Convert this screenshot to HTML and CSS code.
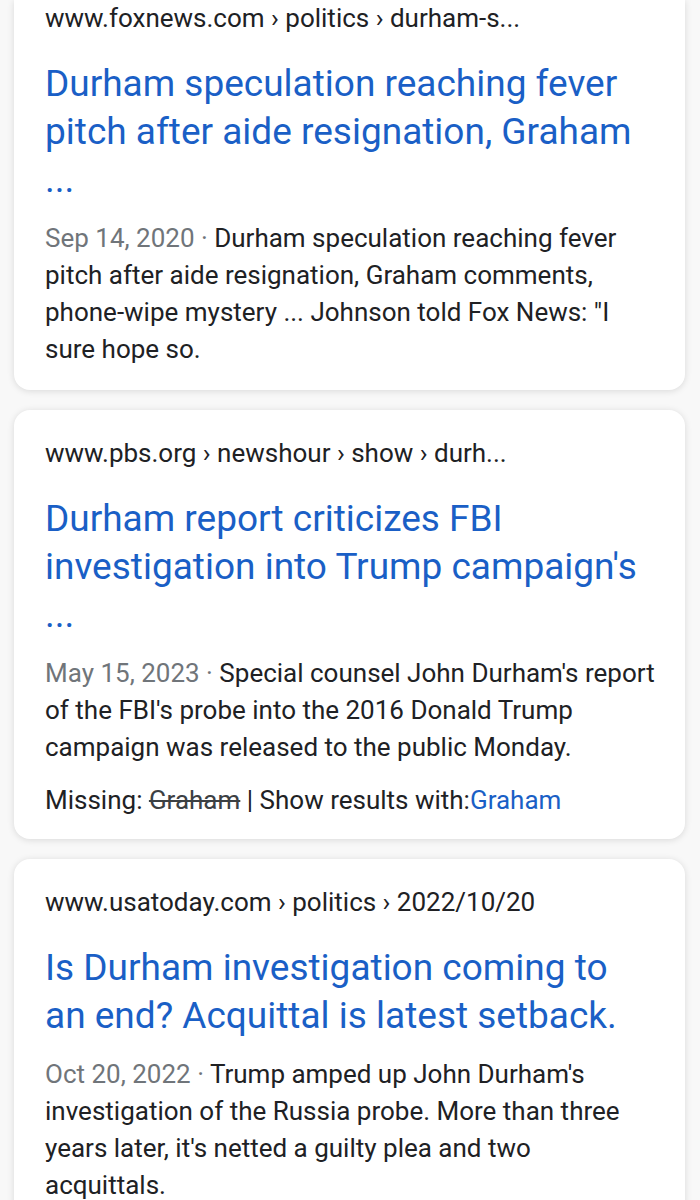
FILE: index.html
```html
<!DOCTYPE html>
<html lang="en">
<head>
<meta charset="utf-8">
<title>Search results</title>
<link rel="stylesheet" href="styles.css">
</head>
<body>
<main class="results">
  <article class="card card-first">
    <div class="crumb">www.foxnews.com › politics › durham-s...</div>
    <a class="title" href="#">Durham speculation reaching fever pitch after aide resignation, Graham ...</a>
    <p class="snippet"><span class="date">Sep 14, 2020 · </span>Durham speculation reaching fever pitch after aide resignation, Graham comments, phone-wipe mystery ... Johnson told Fox News: "I sure hope so.</p>
  </article>
  <article class="card">
    <div class="crumb">www.pbs.org › newshour › show › durh...</div>
    <a class="title" href="#">Durham report criticizes FBI investigation into Trump campaign's ...</a>
    <p class="snippet"><span class="date">May 15, 2023 · </span>Special counsel John Durham's report of the FBI's probe into the 2016 Donald Trump campaign was released to the public Monday.</p>
    <p class="missing">Missing: <s class="struck">Graham</s> | Show results with:<a class="missing-link" href="#">Graham</a></p>
  </article>
  <article class="card">
    <div class="crumb">www.usatoday.com › politics › 2022/10/20</div>
    <a class="title" href="#">Is Durham investigation coming to an end? Acquittal is latest setback.</a>
    <p class="snippet"><span class="date">Oct 20, 2022 · </span>Trump amped up John Durham's investigation of the Russia probe. More than three years later, it's netted a guilty plea and two acquittals.</p>
  </article>
</main>
</body>
</html>
```
FILE: styles.css
```css
html, body {
  margin: 0;
  padding: 0;
}
body {
  background: #f8f8f8;
  font-family: Roboto, "Noto Sans", Arial, sans-serif;
  color: #202124;
  width: 700px;
  height: 1200px;
  overflow: hidden;
}
.results {
  display: flex;
  flex-direction: column;
  gap: 20px;
  padding: 0 15px 0 14px;
}
.card {
  background: #ffffff;
  border-radius: 16px;
  box-shadow: 0 1px 7px rgba(0, 0, 0, 0.13);
  padding: 25px 31px 20px 31px;
  display: flex;
  flex-direction: column;
}
.card-first {
  border-radius: 0 0 16px 16px;
  padding-top: 0;
  padding-bottom: 22px;
}
.crumb {
  font-size: 26px;
  line-height: 36px;
  color: #202124;
  white-space: nowrap;
}
.title {
  display: block;
  margin-top: 24px;
  font-size: 37px;
  line-height: 48px;
  color: #1a5fc6;
  text-decoration: none;
}
.snippet {
  margin: 16px -2px 0 0;
  font-size: 26px;
  line-height: 37px;
  color: #202124;
}
.date {
  color: #70757a;
}
.missing {
  margin: 16px 0 0;
  font-size: 26px;
  line-height: 37px;
  color: #202124;
}
.struck {
  color: #3c4043;
}
.missing-link {
  color: #1a5fc6;
  text-decoration: none;
}
```
